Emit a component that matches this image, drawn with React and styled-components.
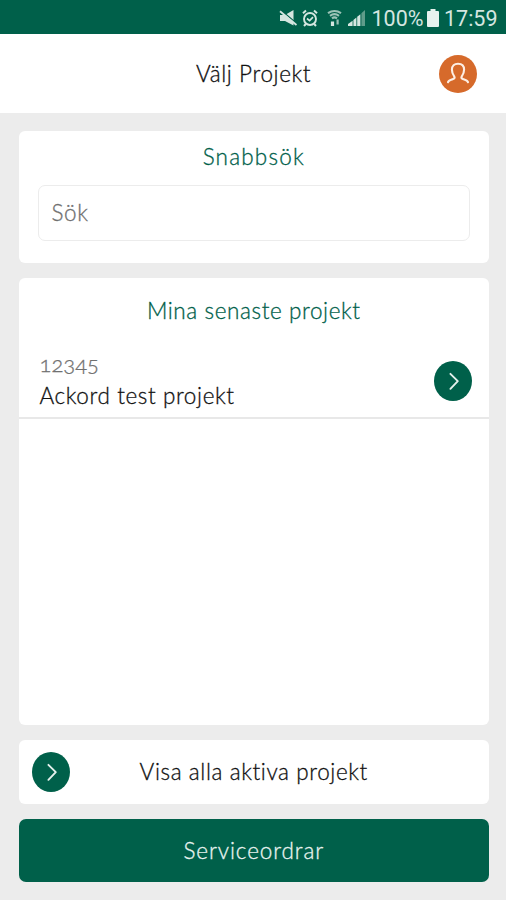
import React from "react";
import styled, { createGlobalStyle } from "styled-components";

const GlobalStyle = createGlobalStyle`
	:root {
		--primary: #00604a;
		--accent: #d66a2b;
		--grey-100: #ececec;
		--grey-500: #707070;
		--status: #d5e6e0;
	}
	* {
		box-sizing: border-box;
	}
	body {
		margin: 0;
		background: var(--grey-100);
		font-family: "Lato", "Liberation Sans", sans-serif;
		font-weight: 300;
	}
	button,
	input {
		font: inherit;
		letter-spacing: inherit;
	}
`;

const ArrowIcon = () => (
	<svg width="38" height="40" viewBox="0 0 38 40" fill="none">
		<path
			d="M16.4 12.8 L23.8 20.2 L16.4 27.8"
			stroke="#e4f0ec"
			strokeWidth="1.9"
			strokeLinecap="round"
			strokeLinejoin="round"
		/>
	</svg>
);

const UserIcon = () => (
	<svg width="38" height="38" viewBox="0 0 38 38" fill="none">
		<path
			d="M9 27.3 C9.4 25.3 11.6 24.9 13.6 24.2 C15.7 23.5 16.1 22.6 15.2 21.3 C13.5 19.1 12.9 17 12.9 14.6 C12.9 10.8 15.4 8.7 19 8.7 C22.6 8.7 25.1 10.8 25.1 14.6 C25.1 17 24.5 19.1 22.8 21.3 C21.9 22.6 22.3 23.5 24.4 24.2 C26.4 24.9 28.6 25.3 29 27.3"
			stroke="#fdeee4"
			strokeWidth="2.1"
			strokeLinecap="round"
			strokeLinejoin="round"
		/>
	</svg>
);

const StatusIcons = () => (
	<svg width="88" height="22" viewBox="0 0 88 22" fill="none">
		{/* muted speaker */}
		<path d="M2 8 H7 L15.5 3 V18.5 L7 14 H2 Z" fill="#d5e6e0" />
		<path d="M3 3.2 L19 16.8" stroke="#00604a" strokeWidth="1.4" />
		<path d="M2 4.2 L18.5 18" stroke="#d5e6e0" strokeWidth="1.8" />
		{/* alarm */}
		<circle cx="32" cy="12" r="6" stroke="#d5e6e0" strokeWidth="1.9" />
		<path
			d="M25 6.3 L28 3.6 M39 6.3 L36 3.6 M27.8 17 L26 19 M36.2 17 L38 19"
			stroke="#d5e6e0"
			strokeWidth="2"
		/>
		<path d="M29 11.5 L31.6 13.6 L35 10.2" stroke="#d5e6e0" strokeWidth="1.7" />
		{/* wifi */}
		<path
			d="M50 6.2 Q56.5 1.8 63 6.2 M52 8.8 Q56.5 5.6 61 8.8 M54 11.3 Q56.5 9.4 59 11.3"
			stroke="#9cc3b7"
			strokeWidth="2.2"
		/>
		<path d="M54.5 19 V14.5" stroke="#d5e6e0" strokeWidth="3.2" />
		<path d="M59.6 17.5 V12.5" stroke="#9cc3b7" strokeWidth="2.2" />
		{/* signal */}
		<path d="M70 19 V17 L74.6 13.8 V19 Z M75.4 19 V13 L78.4 10.6 V19 Z M79.2 19 V9.8 L82.4 7.2 V19 Z" fill="#d5e6e0" />
		<path d="M83.4 19 V6.2 L87 3 V19 Z" fill="#5f9c8a" />
	</svg>
);

const BatteryIcon = () => (
	<svg width="12" height="18" viewBox="0 0 12 18">
		<path d="M3.5 0 H8.5 V2 H11 Q12 2 12 3 V17 Q12 18 11 18 H1 Q0 18 0 17 V3 Q0 2 1 2 H3.5 Z" fill="#e6f2ee" />
	</svg>
);

const App = () => {
	return (
		<Screen>
			<GlobalStyle />
			<StatusBar>
				<StatusIcons />
				<StatusText $width={53}>100%</StatusText>
				<BatteryIcon />
				<StatusText $width={53}>17:59</StatusText>
			</StatusBar>
			<Header>
				<Title>Välj Projekt</Title>
				<Avatar aria-label="Profil">
					<UserIcon />
				</Avatar>
			</Header>
			<Content>
				<SearchCard>
					<Heading $spacing="1.2px">Snabbsök</Heading>
					<SearchInput placeholder="Sök" />
				</SearchCard>
				<ProjectCard>
					<Heading>Mina senaste projekt</Heading>
					<ProjectRow>
						<div>
							<ProjectNumber>12345</ProjectNumber>
							<ProjectName>Ackord test projekt</ProjectName>
						</div>
						<Circle>
							<ArrowIcon />
						</Circle>
					</ProjectRow>
				</ProjectCard>
				<AllProjects>
					<Circle>
						<ArrowIcon />
					</Circle>
					<span>Visa alla aktiva projekt</span>
				</AllProjects>
				<ServiceButton>Serviceordrar</ServiceButton>
			</Content>
		</Screen>
	);
};

const Screen = styled.main`
	display: flex;
	flex-direction: column;
	height: 900px;
	font-size: 22.5px;
	line-height: 30px;
	letter-spacing: 0.6px;
	-webkit-text-stroke: 0.3px;
	color: #111;
`;

const StatusBar = styled.div`
	display: flex;
	align-items: center;
	justify-content: flex-end;
	height: 34px;
	padding: 1px 7px 0 0;
	background: var(--primary);
`;

const StatusText = styled.span`
	width: ${(props) => props.$width}px;
	margin: 2px 2px 0 5.5px;
	font-family: "Roboto", sans-serif;
	font-size: 21.5px;
	font-weight: 400;
	letter-spacing: 0;
	-webkit-text-stroke: 0;
	color: var(--status);
	white-space: nowrap;
`;

const Header = styled.header`
	display: grid;
	grid-template-columns: 1fr auto 1fr;
	align-items: center;
	height: 79px;
	padding: 0 29px 0 30px;
	background: #fff;
`;

const Title = styled.h1`
	grid-column: 2;
	margin: 0;
	font-size: 22.5px;
	font-weight: inherit;
`;

const Avatar = styled.button`
	justify-self: end;
	display: flex;
	width: 38px;
	height: 38px;
	margin-right: 0.5px;
	padding: 0;
	border: 0;
	border-radius: 50%;
	background: var(--accent);
`;

const Content = styled.div`
	flex: 1;
	display: flex;
	flex-direction: column;
	gap: 15px;
	padding: 18px 17px 18px 18.5px;
`;

const Card = styled.section`
	border-radius: 6px;
	background: #fff;
`;

const SearchCard = styled(Card)`
	height: 132px;
	padding: 11px 19px 10px;
`;

const ProjectCard = styled(Card)`
	flex: 1;
	padding-top: 18px;
`;

const Heading = styled.h2`
	margin: 0;
	font-size: 22.5px;
	font-weight: inherit;
	letter-spacing: ${(props) => props.$spacing || "inherit"};
	text-align: center;
	color: var(--primary);
`;

const SearchInput = styled.input`
	display: block;
	width: 100%;
	height: 56px;
	margin-top: 13px;
	padding: 0 13px 1px;
	border: 1.5px solid var(--grey-100);
	border-radius: 7px;
	outline: 0;
	&::placeholder {
		color: var(--grey-500);
		opacity: 1;
	}
`;

const ProjectRow = styled.div`
	display: flex;
	align-items: center;
	justify-content: space-between;
	height: 93px;
	padding: 19px 17px 0 21px;
	border-bottom: 2px solid #e8e8e8;
`;

const ProjectNumber = styled.div`
	margin: -2px 0 2px;
	font-size: 22px;
	font-variant-numeric: oldstyle-nums;
	letter-spacing: 0;
	color: var(--grey-500);
`;

const ProjectName = styled.div``;

const Circle = styled.span`
	display: flex;
	flex-shrink: 0;
	width: 38px;
	height: 40px;
	border-radius: 50%;
	background: var(--primary);
`;

const AllProjects = styled.button`
	display: grid;
	grid-template-columns: 38px 1fr 38px;
	align-items: center;
	height: 64px;
	padding: 0 13px;
	border: 0;
	border-radius: 6px;
	background: #fff;
	color: inherit;
`;

const ServiceButton = styled.button`
	height: 63px;
	padding: 0;
	border: 0;
	border-radius: 7px;
	background: var(--primary);
	color: #e9f4f0;
	letter-spacing: 0.9px;
`;

export default App;
